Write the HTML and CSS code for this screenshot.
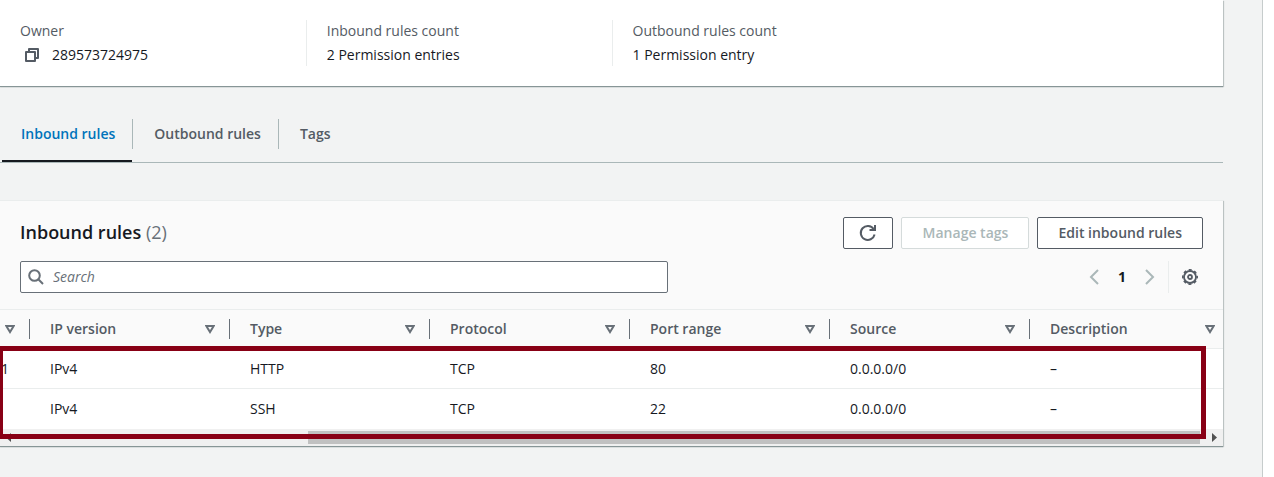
FILE: index.html
```html
<!DOCTYPE html>
<html lang="en">
<head>
<meta charset="utf-8">
<title>Security group - Inbound rules</title>
<link rel="stylesheet" href="styles.css">
</head>
<body>
<svg class="sprite" aria-hidden="true">
  <symbol id="sort" viewBox="0 0 10 9"><path d="M1.3 1h7.4L5 7z" fill="none" stroke="currentColor" stroke-width="2"/></symbol>
</svg>
<main class="page">
  <dl class="card summary">
    <div class="field">
      <dt>Owner</dt>
      <dd class="copyable">
        <button class="icon-button copy" aria-label="Copy owner ID">
          <svg width="16" height="16" viewBox="0 0 16 16" fill="none" stroke="currentColor" stroke-width="2" stroke-linejoin="round"><path d="M2 5h9v9H2zM5 5V2h9v9h-3"/></svg>
        </button>
        <span>289573724975</span>
      </dd>
    </div>
    <div class="field">
      <dt>Inbound rules count</dt>
      <dd>2 Permission entries</dd>
    </div>
    <div class="field">
      <dt>Outbound rules count</dt>
      <dd>1 Permission entry</dd>
    </div>
  </dl>

  <div class="tabs" role="tablist">
    <button class="tab active" role="tab" aria-selected="true">Inbound rules</button>
    <button class="tab" role="tab" aria-selected="false">Outbound rules</button>
    <button class="tab" role="tab" aria-selected="false">Tags</button>
  </div>

  <section class="card rules">
    <header class="rules-header">
      <div class="bar">
        <h2>Inbound rules <span class="count">(2)</span></h2>
        <div class="actions">
          <button class="button refresh" aria-label="Refresh">
            <svg width="18" height="18" viewBox="0 0 18 18" fill="none" stroke="currentColor" stroke-width="2"><path d="M15.6 10.5A7 7 0 1 1 14.6 5"/><path d="M16 1v5h-5.500"/></svg>
          </button>
          <button class="button" disabled>Manage tags</button>
          <button class="button">Edit inbound rules</button>
        </div>
      </div>
      <div class="bar">
        <label class="search">
          <svg width="16" height="16" viewBox="0 0 16 16" fill="none" stroke="currentColor" stroke-width="2"><circle cx="6.500" cy="6.500" r="5.300"/><path d="M10.300 10.300L15 15"/></svg>
          <input type="text" placeholder="Search" aria-label="Search">
        </label>
        <div class="paging">
          <button class="icon-button step" aria-label="Previous page" disabled>
            <svg width="10" height="16" viewBox="0 0 10 16" fill="none" stroke="currentColor" stroke-width="2"><path d="M9 1L2 8l7 7"/></svg>
          </button>
          <button class="icon-button current" aria-current="page">1</button>
          <button class="icon-button step" aria-label="Next page" disabled>
            <svg width="10" height="16" viewBox="0 0 10 16" fill="none" stroke="currentColor" stroke-width="2"><path d="M1 1l7 7-7 7"/></svg>
          </button>
          <button class="icon-button settings" aria-label="Preferences">
            <svg width="16" height="16" viewBox="0 0 16 16" fill="none" stroke="currentColor"><circle cx="8" cy="8" r="6" stroke-width="1.800"/><circle cx="8" cy="8" r="7.200" stroke-width="1.600" stroke-dasharray="3 2.655" stroke-dashoffset="1.500"/><circle cx="8" cy="8" r="2" stroke-width="1.800"/></svg>
          </button>
        </div>
      </div>
    </header>

    <div class="scroller">
      <table>
        <thead>
          <tr>
            <th class="clipped"><span class="head"><svg class="sort"><use href="#sort"/></svg></span></th>
            <th><span class="head">IP version<svg class="sort"><use href="#sort"/></svg></span></th>
            <th><span class="head">Type<svg class="sort"><use href="#sort"/></svg></span></th>
            <th><span class="head">Protocol<svg class="sort"><use href="#sort"/></svg></span></th>
            <th><span class="head">Port range<svg class="sort"><use href="#sort"/></svg></span></th>
            <th><span class="head">Source<svg class="sort"><use href="#sort"/></svg></span></th>
            <th><span class="head">Description<svg class="sort"><use href="#sort"/></svg></span></th>
          </tr>
        </thead>
        <tbody>
          <tr><td class="clipped">1</td><td>IPv4</td><td>HTTP</td><td>TCP</td><td>80</td><td>0.0.0.0/0</td><td>–</td></tr>
          <tr><td class="clipped"></td><td>IPv4</td><td>SSH</td><td>TCP</td><td>22</td><td>0.0.0.0/0</td><td>–</td></tr>
        </tbody>
      </table>
    </div>
    <div class="scrollbar">
      <svg width="5" height="9" viewBox="0 0 5 9"><path d="M5 0v9L0 4.500z" fill="currentColor"/></svg>
      <div class="track"><div class="thumb"></div></div>
      <svg width="5" height="9" viewBox="0 0 5 9"><path d="M0 0v9l5-4.500z" fill="currentColor"/></svg>
    </div>
    <div class="highlight"></div>
  </section>
</main>
</body>
</html>
```
FILE: styles.css
```css
* { box-sizing: border-box; }

body {
  margin: 0;
  background: #fff;
  color: #16191f;
  font: 14px/22px "Open Sans", "Noto Sans", sans-serif;
}

button, input { font: inherit; color: inherit; }
button { padding: 0; border: 0; background: none; }
svg { display: block; flex: none; }
.sprite { display: none; }

.page {
  min-height: 100vh;
  margin-right: 11px;
  padding-right: 39px;
  border-right: 1px solid #c6cccc;
  background: #f2f3f3;
  overflow: hidden;
}

.card {
  background: #fff;
  box-shadow: 0 1px 1px #879596, 1px 1px 1px #c6cccc;
}

.summary {
  display: grid;
  grid-template-columns: repeat(4, 1fr);
  margin: 0;
  padding: 20px 0;
}
.field { padding-left: 20px; }
.field + .field { border-left: 1px solid #eaeded; }
.field dt { margin-bottom: 2px; color: #545b64; }
.field dd { margin: 0; }
.copyable { display: flex; align-items: center; gap: 8px; }
.icon-button { display: grid; place-items: center; color: #545b64; }
.copy { width: 24px; height: 22px; }

.tabs {
  display: flex;
  padding: 20px 0 0 2px;
  border-bottom: 1px solid #aab7b8;
}
.tab {
  position: relative;
  height: 56px;
  padding: 0 17px 0 22px;
  color: #545b64;
  font-weight: 600;
}
.tab.active {
  padding: 2px 17px 0 19px;
  border-bottom: 2px solid #16191f;
  color: #0073bb;
}
.tab + .tab::before {
  content: "";
  position: absolute;
  left: 0;
  top: 13px;
  height: 30px;
  border-left: 1px solid #aab7b8;
}

.rules { position: relative; margin-top: 37px; border-top: 1px solid #eaeded; }
.rules-header {
  display: grid;
  gap: 12px;
  padding: 16px 20px;
  background: #fafafa;
  border-bottom: 1px solid #eaeded;
}
.bar { display: flex; align-items: center; justify-content: space-between; }
h2 { margin: 0; padding-bottom: 2px; font-size: 18px; line-height: 22px; font-weight: 600; }
.count { color: #687078; font-weight: 400; }
.actions { display: flex; gap: 8px; }
.button {
  min-width: 128px;
  height: 32px;
  padding: 0 20px;
  border: 1px solid #545b64;
  border-radius: 2px;
  background: #fff;
  color: #545b64;
  font-weight: 600;
}
.button:disabled { border-color: #d5dbdb; color: #aab7b8; }
.refresh { min-width: 0; padding: 0 15px; }

.search {
  display: flex;
  flex: 0 1 648px;
  align-items: center;
  gap: 9px;
  height: 32px;
  padding: 0 7px;
  border: 1px solid #687078;
  border-radius: 2px;
  background: #fff;
  color: #687078;
}
.search input { flex: 1; min-width: 0; padding: 0; border: 0; outline: 0; background: none; }
.search input::placeholder { color: #687078; font-style: italic; }

.paging { display: flex; align-items: center; height: 32px; }
.step { width: 24px; color: #aab7b8; }
.current { width: 32px; color: #16191f; font-weight: 700; }
.settings { width: 35px; height: 32px; margin-left: 6px; padding-left: 8px; border-left: 1px solid #eaeded; }

.scroller { overflow: hidden; }
table {
  width: calc(100% + 7px);
  table-layout: fixed;
  border-collapse: separate;
  border-spacing: 0;
  text-align: left;
}
th, td { height: 40px; padding: 0 20px; }
th {
  height: 39px;
  padding-right: 0;
  border-bottom: 1px solid #eaeded;
  background: #fafafa;
  color: #545b64;
  font-weight: 600;
  line-height: 20px;
}
.head {
  display: flex;
  align-items: center;
  justify-content: space-between;
  height: 20px;
  padding-right: 14px;
  border-right: 1px solid #687078;
}
th:last-child .head { border-color: transparent; }
.sort { width: 10px; height: 9px; color: #687078; }
tr:first-child td { border-bottom: 1px solid #eaeded; }
.clipped { width: 30px; padding: 0; }
td.clipped { padding-left: 1px; }
.clipped .head { justify-content: flex-end; }

.scrollbar {
  display: flex;
  align-items: center;
  gap: 6px;
  height: 17px;
  padding: 0 6px;
  background: #f0f0f0;
  color: #505050;
}
.track { flex: 1; padding: 0 6px 0 24%; }
.thumb { height: 13px; background: #c1c1c1; }

.highlight {
  position: absolute;
  inset: 145px 17px 7px -2px;
  border: 5px solid #880015;
  pointer-events: none;
}
```
